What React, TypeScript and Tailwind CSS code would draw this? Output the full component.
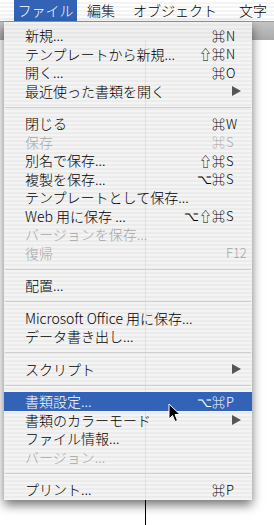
import React from "react";

type Item =
  | "sep"
  | {
      label: string;
      mods?: string;
      keyName?: string;
      sub?: boolean;
      disabled?: boolean;
      active?: boolean;
    };

const items: Item[] = [
  { label: "新規...", mods: "⌘", keyName: "N" },
  { label: "テンプレートから新規...", mods: "⇧⌘", keyName: "N" },
  { label: "開く...", mods: "⌘", keyName: "O" },
  { label: "最近使った書類を開く", sub: true },
  "sep",
  { label: "閉じる", mods: "⌘", keyName: "W" },
  { label: "保存", mods: "⌘", keyName: "S", disabled: true },
  { label: "別名で保存...", mods: "⇧⌘", keyName: "S" },
  { label: "複製を保存...", mods: "⌥⌘", keyName: "S" },
  { label: "テンプレートとして保存..." },
  { label: "Web 用に保存 ...", mods: "⌥⇧⌘", keyName: "S" },
  { label: "バージョンを保存...", disabled: true },
  { label: "復帰", keyName: "F12", disabled: true },
  "sep",
  { label: "配置..." },
  "sep",
  { label: "Microsoft Office 用に保存..." },
  { label: "データ書き出し..." },
  "sep",
  { label: "スクリプト", sub: true },
  "sep",
  { label: "書類設定...", mods: "⌥⌘", keyName: "P", active: true },
  { label: "書類のカラーモード", sub: true },
  { label: "ファイル情報..." },
  { label: "バージョン...", disabled: true },
  "sep",
  { label: "プリント...", mods: "⌘", keyName: "P" },
];

const font = "font-['Noto_Sans_CJK_JP','DejaVu_Sans',sans-serif]";

const Arrow = ({ active }: { active?: boolean }) => (
  <svg width="9" height="10" viewBox="0 0 9 10" className="mr-[11px]">
    <path d="M0 0 L9 5 L0 10 Z" fill={active ? "#fff" : "#555"} />
  </svg>
);

const Row = ({ item }: { item: Exclude<Item, "sep"> }) => {
  const color = item.active
    ? "text-white"
    : item.disabled
    ? "text-[#a6a6a6]"
    : "text-black";
  return (
    <div
      className={`flex h-[18.5px] items-center ${color} ${
        item.active ? "bg-[#3263b6]" : ""
      }`}
    >
      <span className="flex-1 whitespace-nowrap pl-[21px] text-[14px] leading-none">
        {item.label}
      </span>
      {item.sub ? (
        <Arrow active={item.active} />
      ) : (
        <div className="flex items-center text-[13px] leading-none">
          <span className="pr-[1px] text-right">{item.mods}</span>
          <span className="w-[26px]">{item.keyName}</span>
        </div>
      )}
    </div>
  );
};

const Cursor = () => (
  <svg
    width="13"
    height="20"
    viewBox="0 0 13 20"
    className="absolute left-[168px] top-[403px]"
  >
    <path
      d="M1 1 L1 16 L4.5 12.5 L7 18.5 L9.5 17.5 L7 11.5 L12 11.5 Z"
      fill="#000"
      stroke="#fff"
      strokeWidth="1"
      strokeLinejoin="round"
    />
  </svg>
);

export default function App() {
  return (
    <div
      className={`relative h-[525px] w-[274px] overflow-hidden bg-white font-light ${font}`}
    >
      {/* menu bar */}
      <div className="flex h-[22px] items-center border-b border-[#9a9a9a] bg-[repeating-linear-gradient(#ffffff_0_2px,#f3f3f3_2px_4px)] text-[14px] text-black">
        <div className="ml-[14px] flex h-full w-[63px] items-center justify-center bg-[#3263b6] text-white">
          ファイル
        </div>
        <div className="ml-[10px]">編集</div>
        <div className="ml-[18px]">オブジェクト</div>
        <div className="ml-[22px]">文字</div>
      </div>

      {/* window behind */}
      <div className="h-[18px] bg-[linear-gradient(#c4c4c4,#a9a9a9)]" />
      <div className="flex h-full">
        <div className="ml-[145px] w-[1px] bg-black" />
      </div>

      {/* dropdown */}
      <div className="absolute left-[4px] top-[22px] w-[248px] bg-[repeating-linear-gradient(rgba(243,243,243,0.94)_0_2px,rgba(234,234,234,0.94)_2px_4px)] pb-[1px] pt-[4px] shadow-[0_5px_10px_rgba(0,0,0,0.55)]">
        {items.map((item, i) =>
          item === "sep" ? (
            <div key={i} className="flex h-[14px] items-center px-[1px]">
              <div className="h-[1px] w-full bg-[#cfcfcf]" />
            </div>
          ) : (
            <Row key={i} item={item} />
          )
        )}
      </div>

      <Cursor />
    </div>
  );
}
